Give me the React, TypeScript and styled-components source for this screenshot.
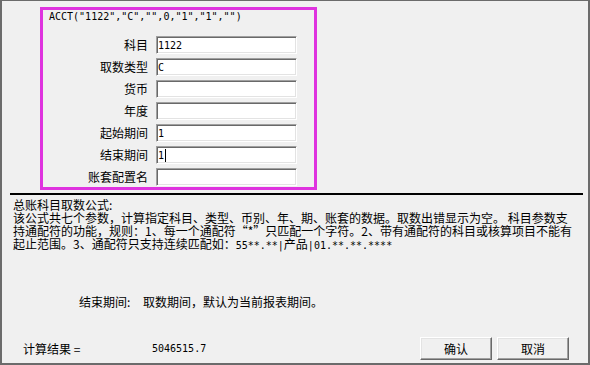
import React from 'react';
import styled, { createGlobalStyle } from 'styled-components';

const GlobalStyle = createGlobalStyle`
  html, body {
    margin: 0;
    padding: 0;
    background: #f0f0f0;
  }
  body {
    font-family: "Noto Sans CJK SC", "Noto Sans", sans-serif;
    font-size: 12px;
    color: #000;
  }
`;

const fields = [
  { label: '科目', value: '1122' },
  { label: '取数类型', value: 'C' },
  { label: '货币', value: '' },
  { label: '年度', value: '' },
  { label: '起始期间', value: '1' },
  { label: '结束期间', value: '1', caret: true },
  { label: '账套配置名', value: '' },
];

const App: React.FC = () => {
  return (
    <>
      <GlobalStyle />
      <Window>
        <ParamPanel>
          <Formula>ACCT("1122","C","",0,"1","1","")</Formula>
          <FieldGrid>
            {fields.map((f) => (
              <React.Fragment key={f.label}>
                <Label>{f.label}</Label>
                <Field>
                  {f.value}
                  {f.caret && <Caret />}
                </Field>
              </React.Fragment>
            ))}
          </FieldGrid>
        </ParamPanel>

        <Separator />

        <Description>
          <Line>总账科目取数公式:</Line>
          <Line>该公式共七个参数，计算指定科目、类型、币别、年、期、账套的数据。取数出错显示为空。 科目参数支</Line>
          <Line>持通配符的功能，规则：1、每一个通配符“*”只匹配一个字符。2、带有通配符的科目或核算项目不能有</Line>
          <Line>起止范围。3、通配符只支持连续匹配如：<Code>55**.**|</Code>产品<Code>|01.**.**.****</Code></Line>
        </Description>

        <ParamNote>
          <NoteName>结束期间:</NoteName>
          <span>取数期间，默认为当前报表期间。</span>
        </ParamNote>

        <Footer>
          <ResultLabel>计算结果 =</ResultLabel>
          <ResultValue>5046515.7</ResultValue>
          <Buttons>
            <DialogButton>确认</DialogButton>
            <DialogButton>取消</DialogButton>
          </Buttons>
        </Footer>
      </Window>
    </>
  );
};

export default App;


const Window = styled.div`
  box-sizing: border-box;
  width: 590px;
  height: 365px;
  border-style: solid;
  border-color: #6b6b6b;
  border-width: 1px 2px 2px 2px;
  background: #f0f0f0;
  display: flex;
  flex-direction: column;
  overflow: hidden;
`;

const ParamPanel = styled.div`
  box-sizing: border-box;
  width: 277px;
  height: 183px;
  margin: 6px 0 0 38px;
  border: 3px solid #df33df;
`;

const Formula = styled.div`
  padding-left: 6px;
  font-family: "DejaVu Sans Mono", monospace;
  font-size: 10px;
  line-height: 14px;
  white-space: nowrap;
`;

const FieldGrid = styled.div`
  display: grid;
  grid-template-columns: 105px 141px;
  column-gap: 8px;
  row-gap: 4px;
  margin-top: 12px;
  align-items: center;
`;

const Label = styled.div`
  text-align: right;
  font-size: 12px;
  line-height: 18px;
  white-space: nowrap;
`;

const Field = styled.div`
  box-sizing: border-box;
  height: 18px;
  display: flex;
  align-items: center;
  padding-left: 1px;
  background: #fff;
  border-style: solid;
  border-width: 1px;
  border-color: #a0a0a0 #fff #fff #a0a0a0;
  box-shadow: inset 1px 1px 0 #696969, inset -1px -1px 0 #e3e3e3;
  font-family: "DejaVu Sans Mono", monospace;
  font-size: 10px;
`;

const Caret = styled.span`
  display: inline-block;
  width: 1px;
  height: 13px;
  margin-left: 1px;
  background: #000;
`;

const Separator = styled.div`
  height: 2px;
  margin: 3px 5px 0 8px;
  background: #000;
`;

const Description = styled.div`
  margin-top: 3px;
  padding-left: 11px;
  font-size: 12px;
  line-height: 13px;
`;

const Line = styled.div`
  white-space: nowrap;
`;

const Code = styled.span`
  font-family: "DejaVu Sans Mono", monospace;
  font-size: 10px;
`;

const ParamNote = styled.div`
  display: flex;
  gap: 10px;
  margin-top: 43px;
  padding-left: 77px;
  font-size: 12px;
  line-height: 14px;
`;

const NoteName = styled.span`
  width: 54px;
`;

const Footer = styled.div`
  display: flex;
  align-items: center;
  height: 23px;
  margin: auto 0 3px 0;
  padding-left: 21px;
`;

const ResultLabel = styled.span`
  width: 129px;
  font-size: 12px;
`;

const ResultValue = styled.span`
  font-family: "DejaVu Sans Mono", monospace;
  font-size: 10px;
`;

const Buttons = styled.div`
  display: flex;
  gap: 5px;
  margin-left: auto;
  margin-right: 19px;
`;

const DialogButton = styled.button`
  box-sizing: border-box;
  width: 72px;
  height: 23px;
  padding: 0;
  background: #f0f0f0;
  border: 1px solid;
  border-color: #fff #696969 #696969 #fff;
  box-shadow: inset -1px -1px 0 #a0a0a0, inset 1px 1px 0 #e3e3e3;
  font-family: "Noto Sans CJK SC", sans-serif;
  font-size: 12px;
  color: #000;
`;
